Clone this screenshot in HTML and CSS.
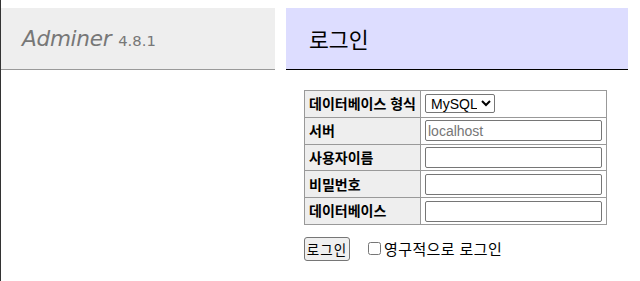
FILE: index.html
```html
<!DOCTYPE html>
<html lang="ko">
<head>
    <meta charset="UTF-8">
    <meta name="viewport" content="width=device-width, initial-scale=1.0">
    <title>로그인 - Adminer</title>
    <link rel="stylesheet" href="styles.css">
</head>
<body>
    <div class="page">
        <div class="menu">
            <h1><span class="brand">Adminer</span> <span class="version">4.8.1</span></h1>
        </div>
        <div class="content">
            <h2>로그인</h2>
            <form>
                <table class="login">
                    <tr>
                        <th>데이터베이스 형식</th>
                        <td>
                            <select class="driver">
                                <option>MySQL</option>
                            </select>
                        </td>
                    </tr>
                    <tr>
                        <th>서버</th>
                        <td><input type="text" placeholder="localhost"></td>
                    </tr>
                    <tr>
                        <th>사용자이름</th>
                        <td><input type="text"></td>
                    </tr>
                    <tr>
                        <th>비밀번호</th>
                        <td><input type="password"></td>
                    </tr>
                    <tr>
                        <th>데이터베이스</th>
                        <td><input type="text"></td>
                    </tr>
                </table>
                <div class="actions">
                    <button type="button">로그인</button>
                    <label class="permanent"><input type="checkbox">영구적으로 로그인</label>
                </div>
            </form>
        </div>
    </div>
</body>
</html>
```

FILE: styles.css
```css
body {
    margin: 0;
    border-left: 1px solid #333;
    min-height: 100vh;
    box-sizing: border-box;
    color: #000;
    background: #fff;
    font-family: "Liberation Sans", "Noto Sans CJK KR", sans-serif;
    font-size: 14.4px;
    line-height: 1.25;
}
.page {
    display: flex;
    padding-top: 8px;
}
.menu {
    width: 274px;
    flex: none;
}
h1 {
    margin: 0;
    padding: 17px 21px;
    height: 27px;
    border-bottom: 1px solid #999;
    background: #eee;
    color: #777;
    font-family: "DejaVu Sans", "Noto Sans CJK KR", sans-serif;
    font-size: 21.6px;
    font-weight: normal;
    line-height: 27px;
    white-space: nowrap;
}
.brand {
    font-style: italic;
    letter-spacing: -0.3px;
}
.version {
    font-size: 14.8px;
    color: #777;
}
.content {
    margin-left: 11px;
    width: 342px;
}
h2 {
    margin: 0 0 20px;
    padding: 17px 23px;
    height: 27px;
    border-bottom: 1px solid #000;
    background: #ddf;
    font-family: "Noto Sans CJK KR", sans-serif;
    font-size: 21.6px;
    font-weight: normal;
    line-height: 27px;
}
form {
    margin-left: 18px;
}
.login {
    border-collapse: collapse;
    font-family: "Noto Sans CJK KR", sans-serif;
    font-size: 14px;
}
.login th,
.login td {
    border: 1px solid #999;
    height: 26.8px;
    padding: 0 4px;
    box-sizing: border-box;
}
.login th {
    width: 116px;
    background: #eee;
    text-align: left;
    font-weight: bold;
    white-space: nowrap;
}
.login td {
    width: 186px;
}
.login input {
    display: block;
    width: 177px;
    height: 21px;
    box-sizing: border-box;
    margin: 0;
    padding: 1px 2px;
    border: 1px solid #767676;
    border-radius: 2px;
    font-family: "Liberation Sans", sans-serif;
    font-size: 14px;
}
.login input::placeholder {
    color: #767676;
}
.driver {
    display: block;
    height: 19px;
    width: 70px;
    margin: 0;
    padding: 0 1px;
    border: 1px solid #767676;
    border-radius: 2px;
    background: #fff;
    font-family: "Liberation Sans", sans-serif;
    font-size: 14px;
}
.actions {
    display: flex;
    align-items: center;
    margin-top: 12px;
}
button {
    height: 24px;
    width: 46px;
    padding: 0;
    border: 1px solid #767676;
    border-radius: 3px;
    background: #efefef;
    font-family: "Noto Sans CJK KR", sans-serif;
    font-size: 13.5px;
    letter-spacing: 1px;
}
.permanent {
    display: flex;
    align-items: center;
    font-family: "Noto Sans CJK KR", sans-serif;
    font-size: 15px;
    letter-spacing: 0.4px;
}
.permanent input {
    width: 13px;
    height: 13px;
    margin: 0 3px 0 18px;
}
```
